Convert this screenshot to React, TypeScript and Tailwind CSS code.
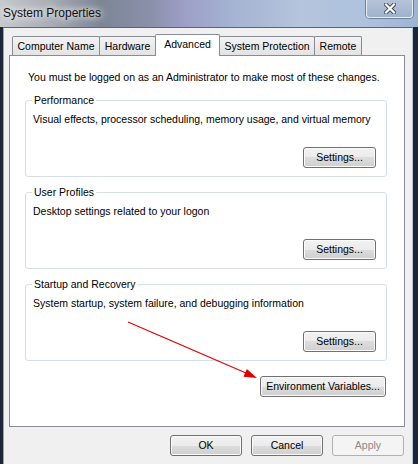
import type { ReactNode } from 'react'

const tabs = [
    { label: 'Computer Name', width: 'w-[88px]' },
    { label: 'Hardware', width: 'w-[57px]' },
    { label: 'Advanced', width: 'w-[65px]', selected: true },
    { label: 'System Protection', width: 'w-[96px]' },
    { label: 'Remote', width: 'w-[48px]' },
]

const groups = [
    { title: 'Performance', text: 'Visual effects, processor scheduling, memory usage, and virtual memory' },
    { title: 'User Profiles', text: 'Desktop settings related to your logon' },
    { title: 'Startup and Recovery', text: 'System startup, system failure, and debugging information' },
]

function Button({ children, width, disabled }: { children: ReactNode; width: string; disabled?: boolean }) {
    if (disabled) {
        return (
            <button className={`${width} h-[21px] rounded-[3px] border border-[#adb2b5] bg-[#f4f4f4] text-[#8a8a8a] leading-[19px]`}>
                {children}
            </button>
        )
    }
    return (
        <button
            className={`${width} h-[21px] rounded-[3px] border border-[#707070] bg-[linear-gradient(#f2f2f2_0%,#ebebeb_50%,#dddddd_50%,#cfcfcf_100%)] shadow-[inset_0_0_0_1px_#fbfbfb] text-black leading-[19px]`}
        >
            {children}
        </button>
    )
}

function CloseButton() {
    return (
        <div className="w-[47px] h-[18px] rounded-b-[4px] border border-t-0 border-[#e9eef5] shadow-[0_0_0_1px_#6d7f99] bg-[linear-gradient(#b6c4d8,#9fb1cb)] flex items-center justify-center">
            <svg width="12" height="11" viewBox="0 0 12 11">
                <path d="M2 1.5 L10 9.5 M10 1.5 L2 9.5" stroke="#3b4656" strokeWidth="4" strokeLinecap="square" />
                <path d="M2 1.5 L10 9.5 M10 1.5 L2 9.5" stroke="#ffffff" strokeWidth="2.2" strokeLinecap="square" />
            </svg>
        </div>
    )
}

export default function App() {
    return (
        <div className="relative w-[418px] h-[464px] flex flex-col bg-[#1d2636] font-['Liberation_Sans',Arial,sans-serif] text-[10.5px] text-black overflow-hidden">
            {/* title bar */}
            <div className="h-[27px] flex items-start justify-between pl-[3px] pr-[5px] bg-[linear-gradient(90deg,#c6c9ce_0%,#a9adb4_12%,#7d8696_24%,#8a90aa_36%,#9d9fc6_44%,#a4b4d2_56%,#b4c5dc_72%,#aec2dd_88%,#9db4d4_100%)]">
                <span className="text-[12px] leading-[26px] text-[#111] [text-shadow:0_0_6px_#fff,0_0_10px_#fff]">System Properties</span>
                <CloseButton />
            </div>

            {/* dialog body */}
            <div className="flex-1 flex flex-col ml-[3px] mr-[5px] bg-[#f0f0f0] border-l border-t border-r border-l-[#9aa5b2] border-t-[#5a6475] border-r-[#b9c3cf] pl-[5px] pr-[7px] pt-[6px]">
                <div className="h-[21px] flex items-end ml-[3px]">
                    {tabs.map((tab, i) =>
                        tab.selected ? (
                            <div
                                key={tab.label}
                                className={`${tab.width} ${i > 0 ? '-ml-px' : ''} relative z-10 h-[22px] -mb-px border border-b-0 border-[#898c95] bg-white rounded-t-[2px] flex justify-center pt-[2px] leading-[15px]`}
                            >
                                {tab.label}
                            </div>
                        ) : (
                            <div
                                key={tab.label}
                                className={`${tab.width} ${i > 0 ? '-ml-px' : ''} h-[19px] border border-b-0 border-[#898c95] rounded-t-[2px] bg-[linear-gradient(#f3f3f3,#e3e3e3)] flex justify-center pt-[2px] leading-[15px]`}
                            >
                                {tab.label}
                            </div>
                        )
                    )}
                </div>

                <div className="h-[372px] border border-[#898c95] bg-white pl-[15px] pr-[17px] pt-[14px] flex flex-col leading-[15px]">
                    <p className="ml-[3px]">You must be logged on as an Administrator to make most of these changes.</p>

                    {groups.map((g) => (
                        <fieldset key={g.title} className="mt-[8px] border border-[#d5dfe5] rounded-[3px] pb-[8px] pr-[10px]">
                            <legend className="ml-[6px] px-[2px]">{g.title}</legend>
                            <p className="mt-[4px] pl-[7px]">{g.text}</p>
                            <div className="mt-[20px] flex justify-end">
                                <Button width="w-[73px]">Settings...</Button>
                            </div>
                        </fieldset>
                    ))}

                    <div className="mt-[15px] flex justify-end mr-[1px]">
                        <Button width="w-[126px]">Environment Variables...</Button>
                    </div>
                </div>

                <div className="mt-[8px] flex justify-end gap-[9px] pr-px">
                    <Button width="w-[72px]">OK</Button>
                    <Button width="w-[72px]">Cancel</Button>
                    <Button width="w-[72px]" disabled>
                        Apply
                    </Button>
                </div>
            </div>

            {/* red annotation arrow */}
            <svg className="absolute inset-0 pointer-events-none" width="418" height="464" viewBox="0 0 418 464">
                <line x1="128" y1="322" x2="246" y2="373" stroke="#e00000" strokeWidth="1.2" />
                <polygon points="257,378 243.5,376.8 246.9,369" fill="#e00000" />
            </svg>
        </div>
    )
}
